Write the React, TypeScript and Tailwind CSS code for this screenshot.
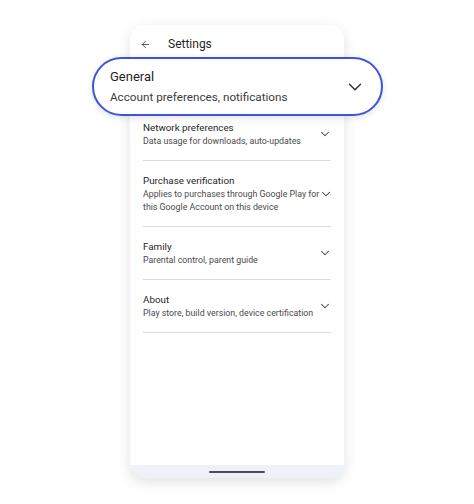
import React from 'react';
import { ArrowLeft, ChevronDown } from 'lucide-react';

const ROWS = [
  { title: 'Network preferences', sub: ['Data usage for downloads, auto-updates'] },
  { title: 'Purchase verification', sub: ['Applies to purchases through Google Play for', 'this Google Account on this device'] },
  { title: 'Family', sub: ['Parental control, parent guide'] },
  { title: 'About', sub: ['Play store, build version, device certification'] },
];

export default function App() {
  return (
    <div
      className="w-[474px] h-[504px] bg-white overflow-hidden pt-[25px] pl-[130px]"
      style={{ fontFamily: 'Roboto, "Noto Sans", sans-serif' }}
    >
      <div className="w-[214px] h-[453px] bg-white rounded-[14px] shadow-[0_4px_14px_rgba(0,0,0,0.12)] flex flex-col">
        {/* Top bar */}
        <div className="h-[32px] flex items-center pl-[10px] pt-[6px]">
          <ArrowLeft size={11} strokeWidth={1.6} className="text-[#1f1f1f]" />
          <span className="ml-[17px] text-[12px] text-[#1f1f1f]">Settings</span>
        </div>

        {/* Highlighted item */}
        <div className="relative z-10 -ml-[38px] -mr-[39px] h-[59px] rounded-full border-[2.5px] border-[#3f52dc] bg-white shadow-[0_2px_6px_rgba(0,0,0,0.12)] flex items-center pl-[16px] pr-[15px]">
          <div className="flex-1 flex flex-col">
            <span className="text-[13px] leading-[20px] text-[#1f1f1f]">General</span>
            <span className="text-[11.7px] leading-[20px] text-[#3c3c3c]">Account preferences, notifications</span>
          </div>
          <ChevronDown size={22} strokeWidth={1.6} className="text-[#333] shrink-0" />
        </div>

        {/* List */}
        <div className="px-[13px] flex flex-col">
          {ROWS.map((row, i) => (
            <div
              key={row.title}
              className={`flex items-center border-b border-[#dcdcdc] ${i === 0 ? 'pt-[4px]' : 'pt-[12px]'} pb-[12px]`}
            >
              <div className="flex-1 flex flex-col">
                <span className="text-[9.8px] leading-[15px] text-[#1f1f1f]">{row.title}</span>
                {row.sub.map((s) => (
                  <span key={s} className="text-[8.8px] leading-[13px] text-[#4a4a4a] whitespace-nowrap">{s}</span>
                ))}
              </div>
              <ChevronDown size={14} strokeWidth={1.8} className="text-[#444] shrink-0 -mr-[1px]" />
            </div>
          ))}
        </div>

        <div className="flex-1" />

        {/* Gesture bar */}
        <div className="h-[13px] bg-[#eef1f8] rounded-b-[14px] flex items-center justify-center">
          <div className="w-[56px] h-[2px] bg-[#4a4d55] rounded-full" />
        </div>
      </div>
    </div>
  );
}
